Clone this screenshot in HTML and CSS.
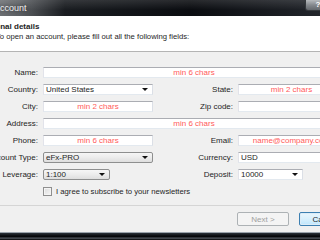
FILE: index.html
```html
<!DOCTYPE html>
<html lang="en">
<head>
    <meta charset="UTF-8">
    <meta name="viewport" content="width=device-width, initial-scale=1.0">
    <title>Account</title>
    <link rel="stylesheet" href="styles.css">
</head>
<body>
    <div class="window">
        <div class="titlebar">
            <span class="title">Account</span>
            <span class="caption-btn help">?</span>
            <span class="caption-btn close"></span>
        </div>

        <div class="header">
            <div class="header-title">Personal details</div>
            <div class="header-text">To open an account, please fill out all the following fields:</div>
        </div>

        <form class="form">
            <div class="fields">
                <label class="label" for="name">Name:</label>
                <input class="field span" id="name" placeholder="min 6 chars">

                <label class="label" for="country">Country:</label>
                <div class="combo">
                    <select id="country"><option>United States</option></select>
                </div>
                <label class="label" for="state">State:</label>
                <input class="field" id="state" placeholder="min 2 chars">

                <label class="label" for="city">City:</label>
                <input class="field" id="city" placeholder="min 2 chars">
                <label class="label" for="zip">Zip code:</label>
                <input class="field" id="zip">

                <label class="label" for="address">Address:</label>
                <input class="field span" id="address" placeholder="min 6 chars">

                <label class="label" for="phone">Phone:</label>
                <input class="field" id="phone" placeholder="min 6 chars">
                <label class="label" for="email">Email:</label>
                <input class="field" id="email" placeholder="name@company.com">

                <label class="label" for="type">Account Type:</label>
                <div class="combo button-combo">
                    <select id="type"><option>eFx-PRO</option></select>
                </div>
                <label class="label" for="currency">Currency:</label>
                <input class="field" id="currency" value="USD">

                <label class="label" for="leverage">Leverage:</label>
                <div class="combo button-combo leverage">
                    <select id="leverage"><option>1:100</option></select>
                </div>
                <label class="label" for="deposit">Deposit:</label>
                <div class="combo deposit">
                    <select id="deposit"><option>10000</option></select>
                </div>
            </div>

            <label class="agree">
                <input type="checkbox" class="check">
                I agree to subscribe to your newsletters
            </label>
        </form>

        <div class="footer">
            <button class="btn" disabled>Next &gt;</button>
            <button class="btn default">Cancel</button>
        </div>

        <div class="frame-bottom"></div>
    </div>
</body>
</html>
```

FILE: styles.css
```css
* {
    margin: 0;
    padding: 0;
    box-sizing: border-box;
}

body {
    font-family: "Liberation Sans", Arial, sans-serif;
    font-size: 8px;
    color: #1e1e1e;
    background: #000;
    overflow: hidden;
}

/* the window is wider than the view, its left edge is cropped */
.window {
    width: 400px;
    margin-left: -30px;
    background: #f0f0f0;
}

.titlebar {
    display: flex;
    align-items: flex-start;
    height: 16px;
    padding-right: 5px;
    background:
        linear-gradient(rgba(255,255,255,0.12), rgba(255,255,255,0) 60%),
        linear-gradient(to right, #8a8c8f 0, #5c5f63 50px, #1a1d21 95px, #0b0d11 220px, #2a2e34 100%);
}

.title {
    flex: 1;
    padding-left: 24px;
    font-size: 9px;
    line-height: 17px;
    color: #f2f2f2;
    text-shadow: 0 0 4px rgba(0,0,0,0.6);
}

.caption-btn {
    height: 11px;
    border: 1px solid #34383c;
    border-top: none;
    border-radius: 0 0 3px 3px;
    color: white;
    font-weight: bold;
    font-size: 8px;
    line-height: 10px;
    text-align: center;
}

.help {
    width: 26px;
    background: linear-gradient(#b7babd, #85898e 50%, #63676c);
}

.close {
    width: 34px;
    background: linear-gradient(#5c6066, #2e3237);
}

.header {
    height: 36px;
    padding: 6px 0 0 8px;
    background: white;
    border-bottom: 1px solid #b4b4b4;
    line-height: 10px;
}

.header-title {
    font-weight: bold;
}

.header-text {
    padding-left: 18px;
    font-size: 7.7px;
}

.form {
    padding: 15px 25px 0 0;
}

.fields {
    display: grid;
    grid-template-columns: 68px 110px 75px 107px;
    grid-auto-rows: 11px;
    column-gap: 5px;
    row-gap: 6px;
    align-items: center;
}

.label {
    justify-self: end;
    white-space: nowrap;
    line-height: 11px;
}

.field,
.combo select {
    width: 100%;
    height: 11px;
    font: inherit;
    color: #1e1e1e;
    background: white;
    border: 1px solid;
    border-color: #abadb3 #dbdfe6 #e3e9ef #e2e3ea;
    outline: none;
    padding: 0 2px;
}

.field::placeholder {
    color: #ff5a5a;
    text-align: center;
    opacity: 1;
}

.span {
    grid-column: 2 / 5;
}

.combo {
    position: relative;
    height: 11px;
}

.combo select {
    appearance: none;
    -webkit-appearance: none;
    line-height: 9px;
}

.combo::after {
    content: "";
    position: absolute;
    right: 5px;
    top: 4px;
    border-left: 3px solid transparent;
    border-right: 3px solid transparent;
    border-top: 3px solid #111;
    pointer-events: none;
}

.button-combo select {
    border: 1px solid #8e8f8f;
    border-radius: 2px;
    background: linear-gradient(#f6f6f6, #ececec 50%, #dedede);
}

.leverage {
    width: 67px;
}

.deposit {
    width: 65px;
}

.agree {
    display: flex;
    align-items: center;
    gap: 4px;
    margin: 7px 0 0 73px;
    height: 9px;
    line-height: 9px;
    font-size: 7.7px;
}

.check {
    appearance: none;
    -webkit-appearance: none;
    width: 9px;
    height: 9px;
    border: 1px solid #8f8f8f;
    background: linear-gradient(135deg, #dcdcdc, #f6f6f6);
    box-shadow: inset 0 0 0 1px #f4f4f4;
}

.footer {
    display: flex;
    justify-content: flex-end;
    gap: 10px;
    margin-top: 9px;
    padding: 6px 19px 6px 0;
    border-top: 1px solid #d5d5d5;
}

.btn {
    width: 52px;
    height: 14px;
    font: inherit;
    color: #1e1e1e;
    border: 1px solid #707070;
    border-radius: 2px;
    background: linear-gradient(#f2f2f2, #ebebeb 50%, #dddddd);
}

.btn:disabled {
    color: #a0a0a0;
    border-color: #adb2b5;
    background: #f4f4f4;
}

.btn.default {
    border-color: #3c7fb1;
    background: linear-gradient(#eaf6fd, #d9f0fc 50%, #bee6fd);
    box-shadow: inset 0 0 0 1px #dcecf7;
}

.frame-bottom {
    height: 8px;
    background: linear-gradient(#9aa3ab 0, #9aa3ab 1px, #2c333b 1px, #07090c 4px, #07090c 5px, #5a6068 6px, #2a2e33 7px, #000 8px);
}
```
